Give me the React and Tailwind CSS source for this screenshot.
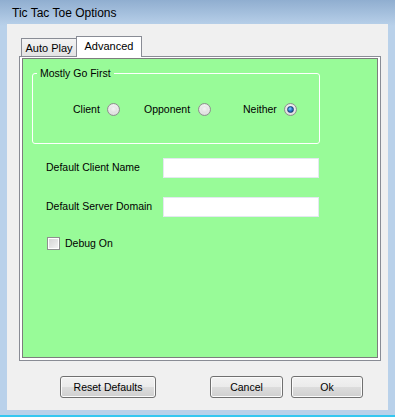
import React from 'react'

const Radio = ({ checked }) => (
  <span className="relative flex h-[13px] w-[13px] items-center justify-center rounded-full border border-[#8f8f8f] bg-[radial-gradient(circle_at_50%_40%,#ffffff_0%,#e6e6e6_55%,#c9c9c9_100%)]">
    {checked ? (
      <span className="h-[7px] w-[7px] rounded-full border border-[#1b3f73] bg-[radial-gradient(circle_at_40%_35%,#8fd0ff_0%,#2a7fd0_45%,#0b3f80_100%)]" />
    ) : (
      <span className="h-[7px] w-[7px] rounded-full bg-[radial-gradient(circle_at_50%_40%,#f4f4f4_0%,#d8d8d8_100%)]" />
    )}
  </span>
)

const RadioItem = ({ label, textWidth, checked, width }) => (
  <div className="flex items-center" style={{ width }}>
    <span className="leading-[13px]" style={{ width: textWidth }}>{label}</span>
    <Radio checked={checked} />
  </div>
)

const Field = ({ label, className }) => (
  <div className={`flex h-[20px] items-center ${className}`}>
    <span className="w-[117px]">{label}</span>
    <div className="h-[20px] w-[156px] border border-[#e3e9ef] bg-white" />
  </div>
)

const Button = ({ children, className }) => (
  <button className={`h-[22px] rounded-[3px] border border-[#707070] bg-[linear-gradient(to_bottom,#f2f2f2_0%,#ebebeb_50%,#dddddd_50%,#cfcfcf_100%)] text-[10.5px] leading-[20px] text-black shadow-[inset_0_0_0_1px_#fbfbfb] ${className}`}>
    {children}
  </button>
)

export default function App() {
  return (
    <div className="flex h-[417px] w-[395px] flex-col bg-[linear-gradient(to_bottom,#90aed0_0px,#b9d1ea_26px)] font-['Liberation_Sans',Arial,sans-serif] text-[10.5px] text-black">
      {/* title bar */}
      <div className="h-[24px] pl-[12px] pt-[4px] text-[12px] leading-[18px]">Tic Tac Toe Options</div>

      {/* client area */}
      <div className="mx-[7px] h-[386px] bg-[#f0f0f0] pl-[12px] pt-[12px]">
        {/* tabs */}
        <div className="flex h-[20px] items-end pl-[2px]">
          <div className="flex h-[18px] w-[56px] items-center justify-center border border-b-0 border-[#898c95] bg-[linear-gradient(to_bottom,#f3f3f3,#e3e3e3)] pt-[1px] text-[11px]">
            Auto Play
          </div>
          <div className="relative z-10 -mb-[1px] -ml-[1px] flex h-[21px] w-[66px] items-center justify-center border border-b-0 border-[#898c95] bg-white pb-[2px] text-[11px]">
            Advanced
          </div>
        </div>

        {/* tab page */}
        <div className="h-[305px] w-[362px] border border-[#898c95] bg-white px-[2px] pb-[2px] pt-[1px]">
          <div className="h-full border border-[#7d7d7d] bg-[#98fb98]">
            <fieldset className="ml-[9px] mt-[8px] h-[77px] w-[288px] rounded-[3px] border border-white">
              <legend className="ml-[4px] px-[3px] leading-[13px]">Mostly Go First</legend>
              <div className="mt-[23px] flex pl-[40px]">
                <RadioItem label="Client" textWidth={34} width={71} />
                <RadioItem label="Opponent" textWidth={54} width={99} />
                <RadioItem label="Neither" textWidth={41} width={60} checked />
              </div>
            </fieldset>

            <div className="pl-[23px]">
              <Field label="Default Client Name" className="mt-[14px]" />
              <Field label="Default Server Domain" className="mt-[19px]" />
              <div className="mt-[20px] flex h-[13px] items-center">
                <span className="ml-[1px] flex h-[13px] w-[13px] items-center justify-center border border-[#8e8f8f] bg-white">
                  <span className="h-[9px] w-[9px] bg-[linear-gradient(135deg,#d5d5d5_0%,#f2f2f2_100%)]" />
                </span>
                <span className="ml-[5px] leading-[13px]">Debug On</span>
              </div>
            </div>
          </div>
        </div>

        {/* buttons */}
        <div className="mt-[15px] flex">
          <Button className="ml-[41px] w-[96px]">Reset Defaults</Button>
          <Button className="ml-[54px] w-[73px]">Cancel</Button>
          <Button className="ml-[8px] w-[72px]">Ok</Button>
        </div>
      </div>

      <div className="h-[5px]" />
      <div className="h-[2px] bg-[#35c7f0]" />
    </div>
  )
}
